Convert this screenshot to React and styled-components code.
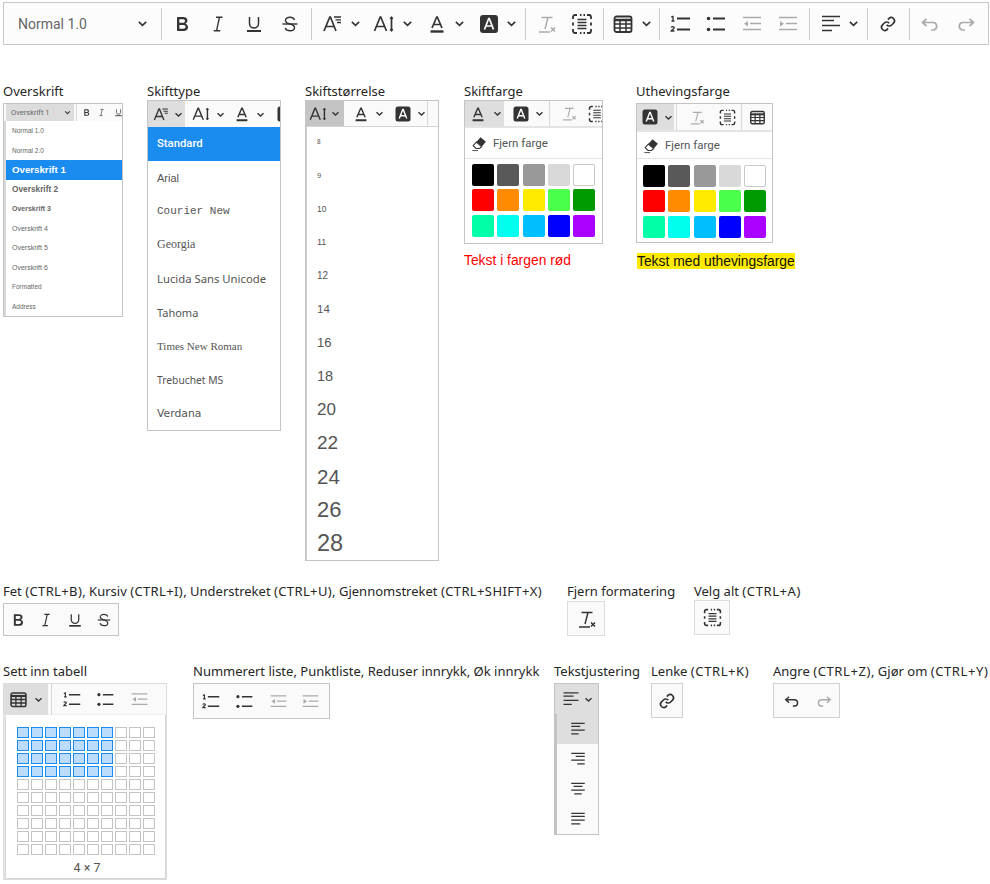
import React from 'react';
import styled, { createGlobalStyle } from 'styled-components';

const Global = createGlobalStyle`
  html, body { margin: 0; padding: 0; background: #fff; }
  body { font-family: "Noto Sans", "Open Sans", sans-serif; color: #1f1f1f; }
`;

const Svg = styled.svg`
  display: block;
  flex: none;
  width: ${p => p.$size}px;
  height: ${p => p.$size}px;
  color: ${p => p.$color};
  fill: none;
  stroke: currentColor;
  stroke-width: 1.7;
`;

const Icon = ({ size = 24, color = '#333', children, ...rest }) => (
  <Svg viewBox="0 0 24 24" $size={size} $color={color} {...rest}>{children}</Svg>
);

const icons = {
  bold: p => <Icon {...p}><path stroke="none" fill="currentColor" d="M7.800 19c-.3 0-.5 0-.6-.2l-.2-.5V5.700c0-.2 0-.4.2-.5l.6-.2h5c1.500 0 2.700.3 3.500 1 .7.6 1.100 1.400 1.100 2.500a3 3 0 0 1-.6 1.900c-.4.6-1 1-1.600 1.200.4.1.9.3 1.300.6s.8.7 1 1.200c.4.4.5 1 .5 1.600 0 1.300-.4 2.300-1.300 3-.8.7-2.100 1-3.800 1H7.800zm5-8.300c.6 0 1.200-.1 1.600-.5.4-.3.6-.7.6-1.300 0-1.100-.8-1.700-2.300-1.700H9.300v3.500h3.400zm.5 6c.7 0 1.300-.1 1.700-.4.4-.4.6-.9.6-1.500s-.2-1-.7-1.400c-.4-.3-1-.4-2-.4H9.400v3.800h4z" /></Icon>,
  italic: p => <Icon {...p}><path d="M10 5.200h6.500M7.800 18.800h6.500M13.500 5.200l-3 13.600" strokeWidth="1.400" /></Icon>,
  underline: p => <Icon {...p}><path d="M7.500 5v6.500a4.500 4.500 0 0 0 9 0V5" strokeWidth="1.500" /><path d="M5 19h14" strokeWidth="2" /></Icon>,
  strike: p => <Icon {...p}><path d="M16.500 8c-.6-1.700-2.300-2.700-4.500-2.700-2.700 0-4.500 1.300-4.500 3.200 0 1.800 1.600 2.800 4.500 3.500 2.900.7 4.500 1.700 4.500 3.500 0 2-1.900 3.300-4.500 3.300-2.400 0-4.100-1-4.800-2.800" strokeWidth="1.400" /><path d="M4.500 12h15" strokeWidth="1.400" /></Icon>,
  family: p => <Icon {...p}><path d="M3 19 8.800 5h.6L15 19M5.200 14.500h8" /><path d="M13 5h7M14.500 7.800H20M16 10.500h4" strokeWidth="1.300" /></Icon>,
  size: p => <Icon {...p}><path d="M1.500 19 7.200 5h.6L13.500 19M3.700 14.500h7.600" /><path d="M18.500 5v14" strokeWidth="1.700" /><path d="M17 7l1.500-2L20 7M17 17l1.500 2 1.500-2" strokeWidth="1.100" /></Icon>,
  color: p => <Icon {...p}><path d="M7 16 11.700 5h.6L17 16M8.700 12.500h6.600" /><path d="M5.500 19.500h13" strokeWidth="2.400" /></Icon>,
  highlight: p => <Icon {...p}><rect x="3" y="3" width="18" height="18" rx="3" fill="currentColor" stroke="none" /><path d="M7.500 17.500 11.700 6.500h.6l4.200 11M9 14h6" stroke="#fff" /></Icon>,
  clear: p => <Icon {...p}><path d="M7.500 5.500h11M14 5.500 11 17M5 20h11" strokeWidth="1.400" /><path d="m17 15.500 4 4M21 15.500l-4 4" strokeWidth="1.500" /></Icon>,
  selectAll: p => <Icon {...p}><path d="M3 7V5a2 2 0 0 1 2-2h2M17 3h2a2 2 0 0 1 2 2v2M21 17v2a2 2 0 0 1-2 2h-2M7 21H5a2 2 0 0 1-2-2v-2M10 3h1.500M13.500 3H15M10 21h1.500M13.500 21H15M3 10.500v3M21 10.500v3" strokeWidth="1.800" /><path d="M7.500 7.500h9M7.500 10.500h9M7.500 13.500h9M7.500 16.500h9" strokeWidth="1.300" /></Icon>,
  table: p => <Icon {...p}><rect x="3.500" y="4.500" width="17" height="15.500" rx="2" strokeWidth="1.800" /><path d="M3.500 8h17" strokeWidth="2.500" /><path d="M3.500 12h17M3.500 16h17M9 7v13M15 7v13" strokeWidth="1.500" /></Icon>,
  num: p => <Icon {...p}><path d="M9 6.500h13M9 17.500h13" strokeWidth="1.800" /><path d="M3.200 5.200 5 4.500v4.500M3.500 9h3" strokeWidth="1.300" /><path d="M3.200 15.500c.4-1.300 3-1.300 3 .2 0 1.100-2.400 1.800-3 3.300h3.300" strokeWidth="1.300" /></Icon>,
  bullet: p => <Icon {...p}><path d="M9 6.500h12M9 17.500h12" strokeWidth="1.800" /><circle cx="4.500" cy="6.500" r="1.800" fill="currentColor" stroke="none" /><circle cx="4.500" cy="17.500" r="1.800" fill="currentColor" stroke="none" /></Icon>,
  outdent: p => <Icon {...p}><path d="M3 5.500h18M10 11.500h11M3 17.500h18" strokeWidth="1.500" /><path d="M8 9v5.500l-4-2.700z" fill="currentColor" stroke="none" /></Icon>,
  indent: p => <Icon {...p}><path d="M3 5.500h18M10 11.500h11M3 17.500h18" strokeWidth="1.500" /><path d="M4 9v5.500l4-2.700z" fill="currentColor" stroke="none" /></Icon>,
  alignLeft: p => <Icon {...p}><path d="M3 4.500h18M3 8.500h12M3 13.500h18M3 18.500h10" strokeWidth="1.500" /></Icon>,
  alignRight: p => <Icon {...p}><path d="M3 4.500h18M9 8.500h12M3 13.500h18M11 18.500h10" strokeWidth="1.500" /></Icon>,
  alignCenter: p => <Icon {...p}><path d="M3 4.500h18M6 8.500h12M3 13.500h18M7 18.500h10" strokeWidth="1.500" /></Icon>,
  justify: p => <Icon {...p}><path d="M3 4.500h18M3 8.500h18M3 13.500h18M3 18.500h12" strokeWidth="1.500" /></Icon>,
  link: p => <Icon {...p}><g transform="translate(4.200 4.200) scale(.65)" strokeWidth="2.500"><path d="M10 13a5 5 0 0 0 7.540.54l3-3a5 5 0 0 0-7.070-7.070l-1.720 1.710" /><path d="M14 11a5 5 0 0 0-7.540-.54l-3 3a5 5 0 0 0 7.070 7.070l1.710-1.710" /></g></Icon>,
  undo: p => <Icon {...p}><path d="M8.500 7 4.500 10.500l4 3.500M4.500 10.500h11a3.800 3.800 0 0 1 0 7.500H13" /></Icon>,
  redo: p => <Icon {...p}><path d="M15.500 7l4 3.500-4 3.500M19.500 10.500h-11a3.800 3.800 0 0 0 0 7.500H11" /></Icon>,
};

const Chevron = ({ size = 10, color = '#333' }) => (
  <Icon size={size} color={color}><path d="M4 8.500 12 16l8-7.500" strokeWidth="3.600" /></Icon>
);

const Page = styled.div`
  width: 990px;
  height: 884px;
  box-sizing: border-box;
  padding: 2px 1px 0 3px;
  overflow: hidden;
`;

const MainBar = styled.div`
  display: flex;
  align-items: center;
  height: 43px;
  box-sizing: border-box;
  border: 1px solid #c9c9c9;
  padding-left: 4px;
  background: #fcfcfc;
`;

const SelectBox = styled.div`
  display: flex;
  align-items: center;
  justify-content: space-between;
  width: 154px;
  height: 32px;
  box-sizing: border-box;
  padding: 0 13px 0 10px;
  border-right: 1px solid #ccc;
  font: 14px Roboto, sans-serif;
  color: #666;
`;

const Group = styled.div`
  display: flex;
  align-items: center;
  height: 32px;
  padding: 0 ${p => p.$end ? 0 : 3}px 0 2px;
  border-right: ${p => p.$end ? 'none' : '1px solid #ccc'};
`;

const Button = styled.div`
  display: flex;
  align-items: center;
  justify-content: center;
  flex: none;
  width: ${p => p.$w}px;
  height: ${p => p.$h || 32}px;
  background: ${p => p.$bg || 'transparent'};
`;

const Split = styled.div`
  display: flex;
  align-items: center;
  flex: none;
  width: ${p => p.$w}px;
  height: ${p => p.$h || 32}px;
  padding-left: ${p => p.$pad}px;
  gap: ${p => p.$gap}px;
  box-sizing: border-box;
  background: ${p => p.$bg || 'transparent'};
`;

const Row = styled.div`
  display: flex;
  margin-top: ${p => p.$top}px;
`;

const Column = styled.div`
  flex: none;
  width: ${p => p.$w}px;
`;

const Label = styled.div`
  height: 18px;
  font-size: 13px;
  line-height: 18px;
  white-space: nowrap;
  color: #262626;
`;

const Keys = styled.span`
  letter-spacing: ${p => p.$tight ? '.38px' : '.6px'};
`;

const Card = styled.div`
  box-sizing: border-box;
  width: ${p => p.$w}px;
  height: ${p => p.$h ? `${p.$h}px` : 'auto'};
  margin-top: ${p => p.$top || 0}px;
  border: 1px solid ${p => p.$line || '#c4c4c4'};
  background: #fff;
  overflow: hidden;
`;

const MiniBar = styled.div`
  display: flex;
  align-items: center;
  height: ${p => p.$h}px;
  background: #fafafa;
  border-bottom: ${p => p.$rule ? '1px solid #d4d4d4' : 'none'};
  overflow: hidden;
`;

const Sep = styled.div`
  flex: none;
  width: 1px;
  align-self: stretch;
  margin: 0 ${p => p.$gap || 0}px;
  background: #d8d8d8;
`;

/* Heading thumbnail */
const ThumbBar = styled.div`
  display: flex;
  align-items: center;
  height: 17px;
  padding-left: 2px;
  background: #fafafa;
`;
const ThumbSelect = styled.div`
  display: flex;
  align-items: center;
  justify-content: space-between;
  flex: none;
  width: 68px;
  height: 17px;
  box-sizing: border-box;
  padding: 0 3px 0 5px;
  background: #dcdcdc;
  font: 7.500px Roboto, sans-serif;
  color: #666;
`;
const ThumbMenu = styled.div`
  border-left: 2px solid #d8d8d8;
  height: 195px;
  display: flex;
  flex-direction: column;
`;
const ThumbItem = styled.div`
  flex: 1;
  display: flex;
  align-items: center;
  padding-left: 6px;
  font: ${p => p.$weight} ${p => p.$size}px "Liberation Sans", Arial, sans-serif;
  color: ${p => p.$active ? '#fff' : '#666'};
  background: ${p => p.$active ? '#1a8cef' : 'transparent'};
`;

/* Menu list */
const Item = styled.div`
  display: flex;
  align-items: center;
  height: ${p => p.$h}px;
  padding-left: ${p => p.$pad}px;
  font-family: ${p => p.$family};
  font-size: ${p => p.$size}px;
  font-weight: ${p => p.$weight || 400};
  color: ${p => p.$active ? '#fff' : '#555'};
  background: ${p => p.$active ? '#1a8cef' : 'transparent'};
  white-space: nowrap;
`;

const SizeList = styled.div`
  border-left: 2px solid #ccc;
  margin: -2px 0 0 -1px;
`;

/* Colour popup */
const RemoveRow = styled.div`
  display: flex;
  align-items: center;
  gap: 5px;
  height: ${p => p.$h}px;
  padding-left: 6px;
  border-top: 2px solid #e4e4e4;
  border-bottom: 1px solid #e4e4e4;
  font: 11.500px Roboto, sans-serif;
  color: #555;
`;

const Swatches = styled.div`
  display: grid;
  grid-template-columns: repeat(5, 22px);
  grid-auto-rows: 22px;
  gap: 3.300px;
  padding: ${p => p.$top}px 0 0 ${p => p.$left}px;
`;
const Swatch = styled.div`
  border-radius: 2px;
  box-sizing: border-box;
  background: ${p => p.$c};
  border: ${p => p.$c === '#ffffff' ? '1px solid #c9c9c9' : 'none'};
`;

const Sample = styled.div`
  margin-top: ${p => p.$top}px;
  font: 13.850px/16px "Liberation Sans", Arial, sans-serif;
  color: ${p => p.$color};
`;
const Marked = styled.span`
  display: inline-block;
  background: #ffeb00;
  margin-left: 1px;
  color: #111;
`;

/* Table picker */
const TablePanel = styled.div`
  box-sizing: border-box;
  width: 161px;
  height: 164px;
  margin-left: 1px;
  border: 1px solid #d6d6d6;
  border-top: none;
  box-shadow: 0 1px 3px rgba(0, 0, 0, .25);
  background: #fff;
  padding: 12px 0 0 11px;
`;
const TableGrid = styled.div`
  display: grid;
  grid-template-columns: repeat(10, 12px);
  grid-auto-rows: 11px;
  gap: 2px;
`;
const TableCell = styled.div`
  box-sizing: border-box;
  border: 1px solid ${p => p.$on ? '#1a8cef' : '#c4c4c4'};
  background: ${p => p.$on ? '#bbdcfa' : '#fff'};
`;
const TableCount = styled.div`
  margin-top: 4px;
  width: 140px;
  text-align: center;
  font: 12.500px/18px Roboto, sans-serif;
  color: #555;
`;

const AlignItem = styled.div`
  display: flex;
  align-items: center;
  justify-content: center;
  height: 30px;
  background: ${p => p.$active ? '#dedede' : 'transparent'};
`;
const AlignMenu = styled.div`
  border-left: 2px solid #c4c4c4;
  background: #fafafa;
`;

const Eraser = () => (
  <Icon size={17} color="#333">
    <path d="M13.500 3 21 9.500l-6 7-7.500-6.500z" fill="currentColor" stroke="none" />
    <path d="M7.500 10 3 15l4 4h5l3-2.500z" fill="#fff" strokeWidth="1.500" />
    <path d="M2 22h8" strokeWidth="1.200" />
  </Icon>
);

const swatchColors = ['#000000', '#595959', '#999999', '#d9d9d9', '#ffffff', '#ff0000', '#ff8c00', '#ffeb00', '#4dff4d', '#009900', '#00ffa6', '#00ffee', '#00bfff', '#0000ff', '#a900ff'];

const SwatchGrid = ({ top, left }) => (
  <Swatches $top={top} $left={left}>
    {swatchColors.map(c => <Swatch key={c} $c={c} />)}
  </Swatches>
);

const I = ({ name, ...p }) => icons[name](p);

const BIG = 24;
const GREY = '#aaa';

const MainSplit = ({ name, w = 52, pad = 7, gap = 5, size = 24 }) => (
  <Split $w={w} $pad={pad} $gap={gap}><I name={name} size={size} /><Chevron size={11} /></Split>
);
const MainBtn = ({ name, color }) => <Button $w={36}><I name={name} size={BIG} color={color} /></Button>;

const MiniSplit = ({ name, w, bg, size = 20, pad = 7, gap = 4, h = 24 }) => (
  <Split $w={w} $h={h} $pad={pad} $gap={gap} $bg={bg}><I name={name} size={size} /><Chevron size={9} /></Split>
);

const MiniBtn = ({ name, w = 29, h = 24, size = 19, color }) => (
  <Button $w={w} $h={h}><I name={name} size={size} color={color} /></Button>
);

const fonts = [
  ['Standard', 'Roboto, sans-serif', 11.3, 500],
  ['Arial', '"Liberation Sans", sans-serif', 11],
  ['Courier New', '"Liberation Mono", monospace', 11],
  ['Georgia', '"Liberation Serif", serif', 12],
  ['Lucida Sans Unicode', '"Noto Sans", sans-serif', 11.300],
  ['Tahoma', '"Noto Sans", sans-serif', 11],
  ['Times New Roman', '"Liberation Serif", serif', 11],
  ['Trebuchet MS', '"Noto Sans", sans-serif', 10.300],
  ['Verdana', '"DejaVu Sans", sans-serif', 10.800],
];

const headings = [
  ['Normal 1.0', 6.5, 400], ['Normal 2.0', 6.5, 400], ['Overskrift 1', 9.7, 700], ['Overskrift 2', 8.3, 700],
  ['Overskrift 3', 7, 700], ['Overskrift 4', 7, 400], ['Overskrift 5', 7, 400], ['Overskrift 6', 7, 400],
  ['Formatted', 6.5, 400], ['Address', 6.5, 400],
];

const sizes = [[8, 6.5], [9, 7.5], [10, 8.5], [11, 9], [12, 10], [14, 11.5], [16, 13], [18, 14.5], [20, 17], [22, 19], [24, 20.5], [26, 22], [28, 23.5]];

export default function App() {
  return (
    <Page>
      <Global />
      <MainBar>
        <SelectBox>Normal 1.0<Chevron size={11} /></SelectBox>
        <Group>
          <MainBtn name="bold" /><MainBtn name="italic" /><MainBtn name="underline" /><MainBtn name="strike" />
        </Group>
        <Group>
          <MainSplit name="family" /><MainSplit name="size" /><MainSplit name="color" /><MainSplit name="highlight" />
        </Group>
        <Group>
          <MainBtn name="clear" color={GREY} /><MainBtn name="selectAll" />
        </Group>
        <Group><MainSplit name="table" w={50} pad={5} gap={6} /></Group>
        <Group>
          <MainBtn name="num" /><MainBtn name="bullet" /><MainBtn name="outdent" color={GREY} /><MainBtn name="indent" color={GREY} />
        </Group>
        <Group><MainSplit name="alignLeft" pad={7} /></Group>
        <Group><Button $w={36}><I name="link" size={BIG} /></Button></Group>
        <Group $end><MainBtn name="undo" color={GREY} /><MainBtn name="redo" color={GREY} /></Group>
      </MainBar>

      <Row $top={37}>
        <Column $w={144}>
          <Label>Overskrift</Label>
          <Card $w={120} $h={214} $top={3}>
            <ThumbBar>
              <ThumbSelect>Overskrift 1<Chevron size={7} /></ThumbSelect>
              <Sep $gap={2} />
              <MiniBtn name="bold" w={14} h={17} size={11} />
              <MiniBtn name="italic" w={17} h={17} size={11} />
              <MiniBtn name="underline" w={17} h={17} size={11} />
            </ThumbBar>
            <ThumbMenu>
              {headings.map(([t, s, w]) => (
                <ThumbItem key={t} $size={s} $weight={w} $active={t === 'Overskrift 1'}>{t}</ThumbItem>
              ))}
            </ThumbMenu>
          </Card>
        </Column>

        <Column $w={158}>
          <Label>Skifttype</Label>
          <Card $w={134} $h={331}>
            <MiniBar $h={26}>
              <MiniSplit name="family" w={37} h={26} bg="#dedede" size={19} pad={4} gap={3} />
              <MiniSplit name="size" w={40} h={26} pad={7} />
              <MiniSplit name="color" w={40} h={26} pad={7} />
              <MiniSplit name="highlight" w={30} h={26} pad={10} />
            </MiniBar>
            {fonts.map(([t, f, s, w], i) => (
              <Item key={t} $h={33.700} $pad={9} $family={f} $size={s} $weight={w} $active={i === 0}>{t}</Item>
            ))}
          </Card>
        </Column>

        <Column $w={159}>
          <Label>Skiftstørrelse</Label>
          <Card $w={134} $h={461}>
            <MiniBar $h={25} $rule>
              <MiniSplit name="size" w={38} h={25} bg="#c4c4c4" size={20} pad={3} gap={2} />
              <MiniSplit name="color" w={41} h={25} pad={7} />
              <MiniSplit name="highlight" w={42} h={25} pad={8} />
              <Sep />
            </MiniBar>
            <SizeList>
              {sizes.map(([t, s]) => (
                <Item key={t} $h={33.500} $pad={10} $family='"Liberation Sans", sans-serif' $size={s}>{t}</Item>
              ))}
            </SizeList>
          </Card>
        </Column>

        <Column $w={172}>
          <Label>Skiftfarge</Label>
          <Card $w={139} $h={144}>
            <MiniBar $h={25}>
              <MiniSplit name="color" w={39} h={25} bg="#dedede" pad={3} gap={5} />
              <MiniSplit name="highlight" w={45} h={25} pad={7} gap={4} />
              <Sep />
              <MiniBtn name="clear" w={37} h={25} color={GREY} />
              <MiniBtn name="selectAll" w={20} h={25} size={20} />
            </MiniBar>
            <RemoveRow $h={30}><Eraser /> Fjern farge</RemoveRow>
            <SwatchGrid top={5} left={7} />
          </Card>
          <Sample $top={8} $color="#ff0000">Tekst i fargen rød</Sample>
        </Column>

        <Column $w={300}>
          <Label>Uthevingsfarge</Label>
          <Card $w={137} $h={140} $top={3}>
            <MiniBar $h={26}>
              <MiniSplit name="highlight" w={37} h={26} bg="#dedede" pad={3} gap={4} />
              <Sep $gap={2} />
              <MiniBtn name="clear" w={34} h={26} color={GREY} />
              <MiniBtn name="selectAll" w={28} h={26} />
              <Sep />
              <MiniBtn name="table" w={30} h={26} />
            </MiniBar>
            <RemoveRow $h={26}><Eraser /> Fjern farge</RemoveRow>
            <SwatchGrid top={6} left={6} />
          </Card>
          <Sample $top={10}><Marked>Tekst med uthevingsfarge</Marked></Sample>
        </Column>
      </Row>

      <Row $top={21}>
        <Column $w={564}>
          <Label>Fet <Keys $tight>(CTRL+B)</Keys>, Kursiv <Keys $tight>(CTRL+I)</Keys>, Understreket <Keys $tight>(CTRL+U)</Keys>, Gjennomstreket <Keys $tight>(CTRL+SHIFT+X)</Keys></Label>
          <Card $w={116} $h={33} $top={3}>
            <MiniBar $h={31}>
              <MiniBtn name="bold" w={28} h={31} size={20} /><MiniBtn name="italic" w={28} h={31} size={20} />
              <MiniBtn name="underline" w={29} h={31} size={20} /><MiniBtn name="strike" w={29} h={31} size={20} />
            </MiniBar>
          </Card>
        </Column>
        <Column $w={127}>
          <Label>Fjern formatering</Label>
          <Card $w={38} $h={35} $top={1} $line="#dcdcdc">
            <MiniBar $h={33}><MiniBtn name="clear" w={36} h={33} size={24} /></MiniBar>
          </Card>
        </Column>
        <Column $w={200}>
          <Label>Velg alt <Keys>(CTRL+A)</Keys></Label>
          <Card $w={36} $h={35} $line="#dcdcdc">
            <MiniBar $h={33}><MiniBtn name="selectAll" w={34} h={33} size={21} /></MiniBar>
          </Card>
        </Column>
      </Row>

      <Row $top={26}>
        <Column $w={190}>
          <Label>Sett inn tabell</Label>
          <Card $w={164} $top={3} $line="#dcdcdc">
            <MiniBar $h={31}>
              <MiniSplit name="table" w={44} h={31} bg="#dedede" pad={4} gap={5} size={21} />
              <Sep $gap={3} />
              <MiniBtn name="num" w={32} h={31} size={21} />
              <MiniBtn name="bullet" w={36} h={31} size={21} />
              <MiniBtn name="outdent" w={32} h={31} size={21} color={GREY} />
              <MiniBtn name="indent" w={42} h={31} size={21} color={GREY} />
            </MiniBar>
            <TablePanel>
              <TableGrid>
                {Array.from({ length: 100 }, (_, i) => (
                  <TableCell key={i} $on={i < 40 && i % 10 < 7} />
                ))}
              </TableGrid>
              <TableCount>4 × 7</TableCount>
            </TablePanel>
          </Card>
        </Column>
        <Column $w={361}>
          <Label>Nummerert liste, Punktliste, Reduser innrykk, Øk innrykk</Label>
          <Card $w={137} $h={36} $top={3}>
            <MiniBar $h={34}>
              <MiniBtn name="num" w={32} h={34} size={21} />
              <MiniBtn name="bullet" w={36} h={34} size={21} />
              <MiniBtn name="outdent" w={32} h={34} size={21} color={GREY} />
              <MiniBtn name="indent" w={33} h={34} size={21} color={GREY} />
            </MiniBar>
          </Card>
        </Column>
        <Column $w={97}>
          <Label>Tekstjustering</Label>
          <Card $w={45} $h={152} $top={3}>
            <MiniBar $h={30}>
              <MiniSplit name="alignLeft" w={43} h={30} bg="#dedede" pad={6} gap={3} size={20} />
            </MiniBar>
            <AlignMenu>
              <AlignItem $active><I name="alignLeft" size={18} /></AlignItem>
              <AlignItem><I name="alignRight" size={18} /></AlignItem>
              <AlignItem><I name="alignCenter" size={18} /></AlignItem>
              <AlignItem><I name="justify" size={18} /></AlignItem>
            </AlignMenu>
          </Card>
        </Column>
        <Column $w={122}>
          <Label>Lenke <Keys>(CTRL+K)</Keys></Label>
          <Card $w={32} $h={35} $top={3} $line="#d0d0d0">
            <MiniBar $h={33}><MiniBtn name="link" w={30} h={33} size={24} /></MiniBar>
          </Card>
        </Column>
        <Column $w={216}>
          <Label>Angre <Keys>(CTRL+Z)</Keys>, Gjør om <Keys>(CTRL+Y)</Keys></Label>
          <Card $w={67} $h={35} $top={3} $line="#d0d0d0">
            <MiniBar $h={33}>
              <MiniBtn name="undo" w={35} h={33} size={20} /><MiniBtn name="redo" w={30} h={33} size={20} color={GREY} />
            </MiniBar>
          </Card>
        </Column>
      </Row>
    </Page>
  );
}
